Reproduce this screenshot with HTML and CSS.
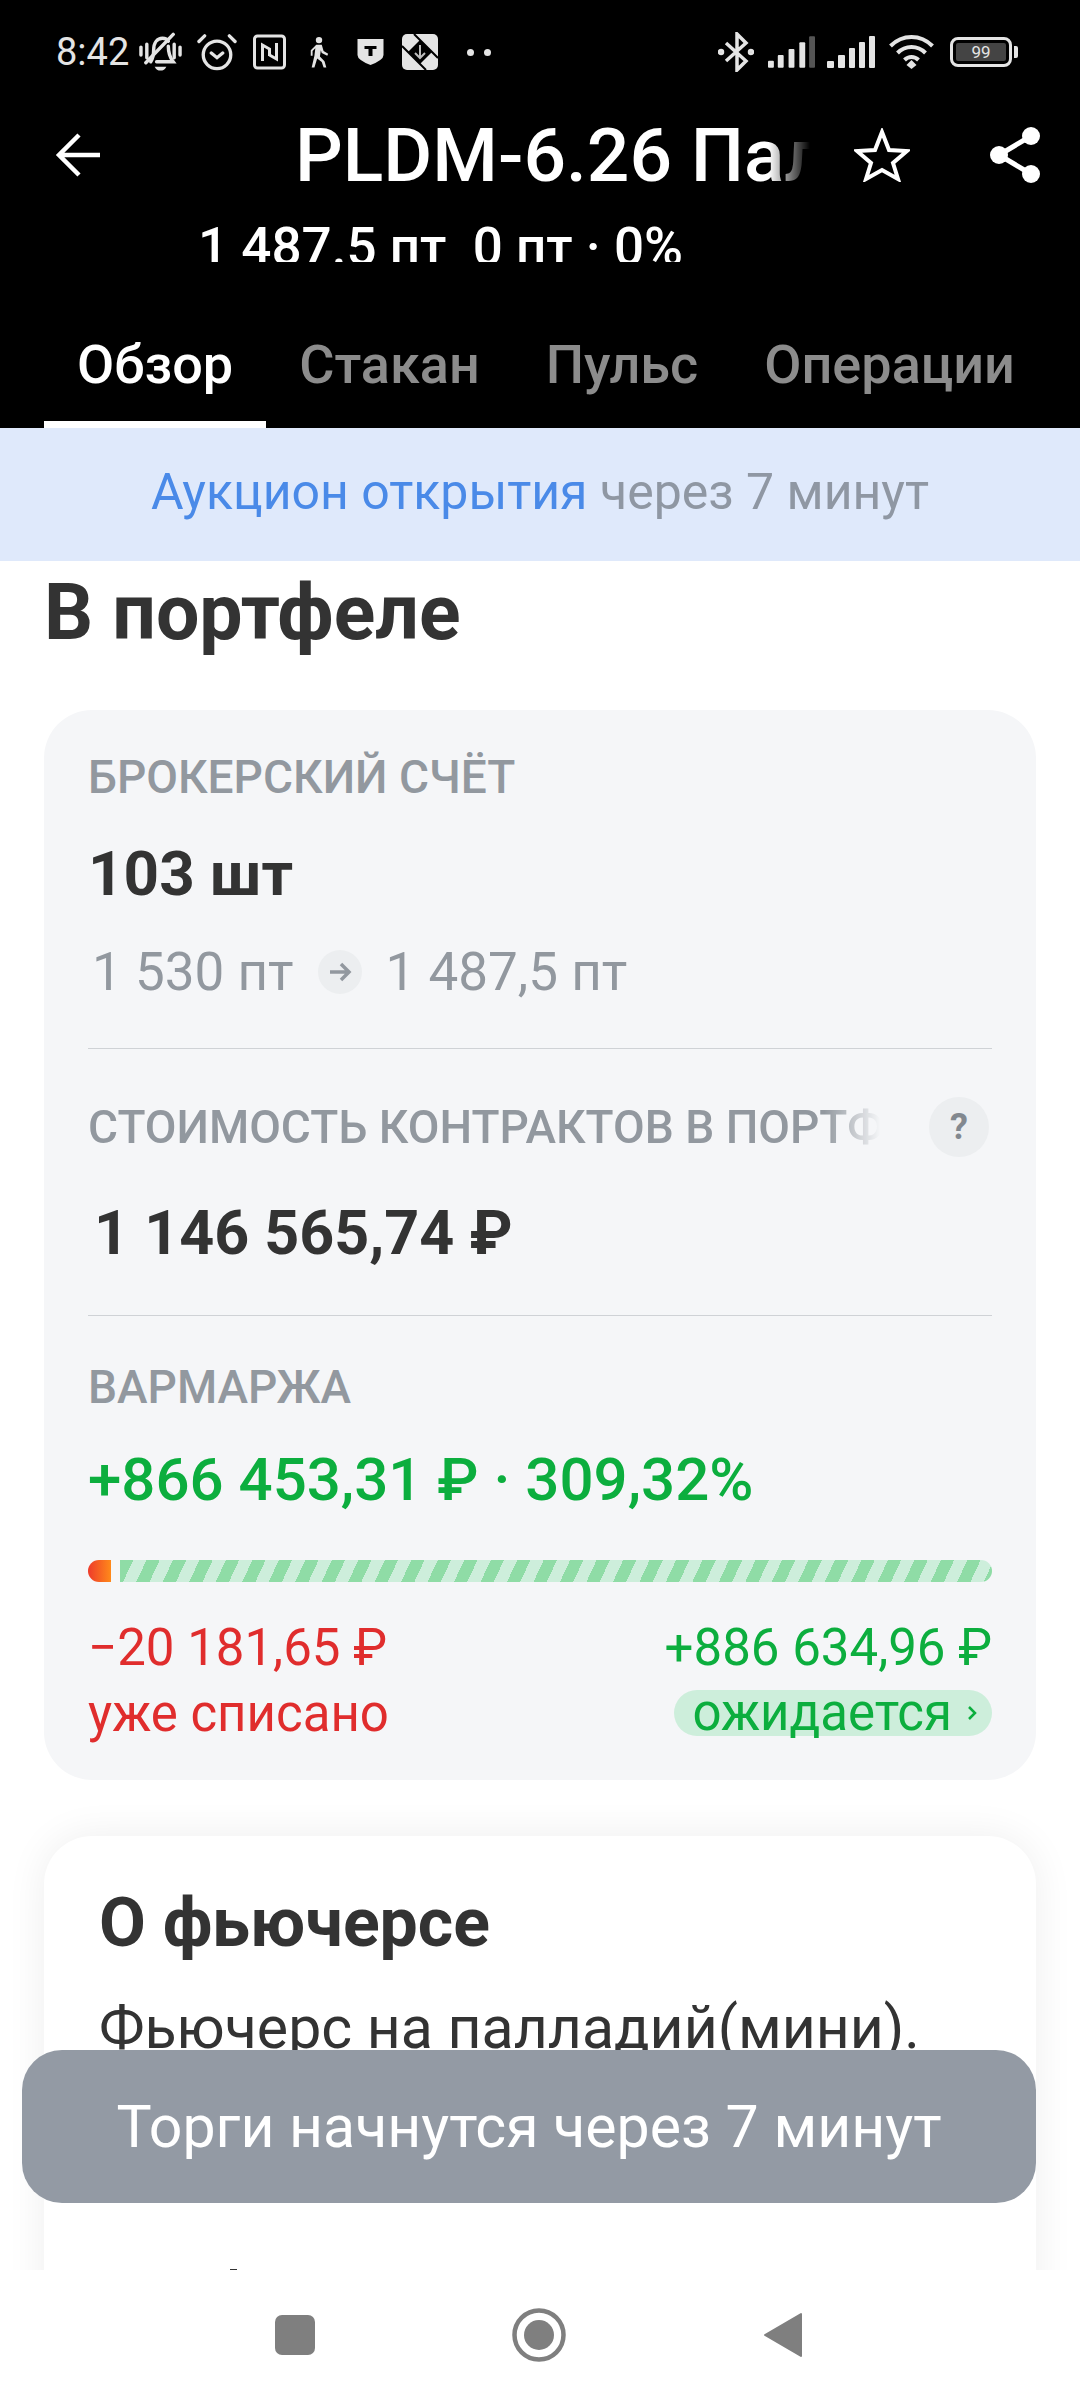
FILE: index.html
```html
<!DOCTYPE html>
<html lang="ru">
<head>
  <meta charset="UTF-8">
  <title>PLDM-6.26</title>
  <link rel="stylesheet" href="styles.css">
</head>
<body>
<div class="phone">
  <div class="top">
    <div class="status">
      <div class="status-left">
        <span class="time">8:42</span>
        <svg class="st bell" width="43" height="40" viewBox="0 0 44 40" fill="none" stroke="#e4e4e4" stroke-width="3.500" stroke-linecap="round"><path d="M2 15v8M8 12v14M36 12v14M42 15v8"/><path d="M12 30c2-3 3-6 3-12 0-8 4-12 9-12 3 0 5 1 6 3M30 14c0 8 2 12 5 16H18"/><path d="M7 31L35 2"/><path d="M16 35h12q-2 4-6 4t-6-4z" fill="#e4e4e4" stroke="none"/></svg>
        <svg class="st alarm" width="40" height="38" viewBox="0 0 42 40" fill="none" stroke="#e4e4e4" stroke-width="3.500" stroke-linecap="round"><circle cx="21" cy="23" r="14.500"/><path d="M15 21l6 5 6-5M2 9l6-6M40 9l-6-6"/></svg>
        <svg class="st nfc" width="35" height="36" viewBox="0 0 34 36" fill="none" stroke="#e4e4e4" stroke-width="3"><rect x="2" y="2" width="30" height="32" rx="3"/><path d="M10 27V11l7 4v7M24 9v16l-7-4"/></svg>
        <svg class="st walk" width="22" height="32" viewBox="0 0 24 34" fill="#e4e4e4"><circle cx="12" cy="4" r="3.500"/><path d="M9 9h6l2 7 5 3-1 2-6-3-1-3-1 7 5 5 2 7h-3l-2-6-5-4-3 10H4l3-13 1-8-3 3v5H3v-6z"/></svg>
        <svg class="st shield" width="29" height="28" viewBox="0 0 28 28"><path d="M1 1h26v16q0 5-13 10Q1 22 1 17z" fill="#e4e4e4"/><path d="M8 8h12v3h-4v7h-4v-7H8z" fill="#000"/></svg>
        <svg class="st box" width="36" height="36" viewBox="0 0 36 36"><rect width="36" height="36" rx="5" fill="#e4e4e4"/><path d="M12 0l24 24M0 12l24 24" fill="none" stroke="#000" stroke-width="2"/><path d="M18 6l12 12-12 12L6 18z" fill="#000"/><path d="M18 11v13M13 19l5 5 5-5" fill="none" stroke="#bbb" stroke-width="2"/></svg>
        <span class="dots"><i></i><i></i></span>
      </div>
      <div class="status-right">
        <svg width="36" height="40" viewBox="0 0 36 40" fill="none" stroke="#e4e4e4" stroke-width="3.500"><path d="M8 11l20 18-9 9V2l9 9L8 29"/><circle cx="3" cy="20" r="1.500"/><circle cx="33" cy="20" r="1.500"/></svg>
        <svg class="sig" width="47" height="32" viewBox="0 0 48 32"><g fill="#e4e4e4"><rect y="25" width="6" height="7" rx="1"/><rect x="10" y="19" width="6" height="13" rx="1"/><rect x="21" y="13" width="6" height="19" rx="1"/><rect x="32" y="6" width="6" height="26" rx="1"/></g><rect x="42" width="6" height="32" rx="1" fill="#555"/></svg>
        <svg class="sig2" width="48" height="32" viewBox="0 0 48 32" fill="#e4e4e4"><rect y="25" width="7" height="7" rx="1"/><rect x="11" y="19" width="7" height="13" rx="1"/><rect x="22" y="12" width="6" height="20" rx="1"/><rect x="32" y="6" width="6" height="26" rx="1"/><rect x="42" width="6" height="32" rx="1"/></svg>
        <svg class="wifi" width="47" height="36" viewBox="0 0 46 36" fill="none" stroke="#e4e4e4" stroke-width="4"><path d="M2 12c12-12 30-12 42 0M9 19c8-8 20-8 28 0M16 26c4-4 10-4 14 0"/><path d="M18 31l5-5 5 5-5 4z" fill="#e4e4e4" stroke="none"/></svg>
        <div class="battery"><div class="battery-body"><span>99</span></div><div class="battery-tip"></div></div>
      </div>
    </div>
    <div class="title-row">
      <svg class="back" width="46" height="46" viewBox="0 0 46 46" fill="none" stroke="#fff" stroke-width="4.500"><path d="M45 23H4M24 3L4 23l20 20"/></svg>
      <div class="title"><span>PLDM-6.26 Па</span><span>лладий</span></div>
      <svg class="star" width="56" height="54" viewBox="0 0 56 54" fill="none" stroke="#fff" stroke-width="4"><path d="M28 4l7 18 18 1-14 12 5 16-16-9-16 9 5-16L3 23l18-1z"/></svg>
      <svg class="share" width="52" height="58" viewBox="0 0 52 58" fill="#fff"><circle cx="41" cy="10" r="9"/><circle cx="9" cy="29" r="9"/><circle cx="41" cy="48" r="9"/><path d="M41 10L9 29l32 19" fill="none" stroke="#fff" stroke-width="5"/></svg>
    </div>
    <div class="price-row"><span>1 487.5 пт&nbsp; 0 пт · 0%</span></div>
    <div class="tabs">
      <div class="tab active">Обзор</div>
      <div class="tab">Стакан</div>
      <div class="tab">Пульс</div>
      <div class="tab">Операции</div>
    </div>
  </div>

  <div class="banner"><b>Аукцион открытия</b> через 7 минут</div>

  <div class="content">
    <h1 class="heading">В портфеле</h1>

    <div class="card">
      <div class="label">БРОКЕРСКИЙ СЧЁТ</div>
      <div class="amount">103 шт</div>
      <div class="change">
        <span>1 530 пт</span>
        <svg class="arrow" width="44" height="44" viewBox="0 0 44 44"><circle cx="22" cy="22" r="22" fill="#eceef0"/><path d="M12 22h19M23 14l8 8-8 8" fill="none" stroke="#92989f" stroke-width="3.500"/></svg>
        <span>1 487,5 пт</span>
      </div>
      <div class="line"></div>
      <div class="label-row">
        <div class="label fade">СТОИМОСТЬ КОНТРАКТОВ В ПОРТФЕЛЕ</div>
        <div class="hint">?</div>
      </div>
      <div class="amount sum">1 146 565,74 ₽</div>
      <div class="line second"></div>
      <div class="label">ВАРМАРЖА</div>
      <div class="margin">+866 453,31 ₽ · 309,32%</div>
      <div class="bar"><div class="bar-red"></div><div class="bar-green"></div></div>
      <div class="totals">
        <div class="red">
          <div class="num">−20 181,65 ₽</div>
          <div class="sub">уже списано</div>
        </div>
        <div class="green">
          <div class="num">+886 634,96 ₽</div>
          <div class="pill">ожидается <svg width="12" height="18" viewBox="0 0 12 18" fill="none" stroke="#0cae3e" stroke-width="2.500"><path d="M3 3l6 6-6 6"/></svg></div>
        </div>
      </div>
    </div>

    <div class="card white">
      <h2 class="about">О фьючерсе</h2>
      <p class="text">Фьючерс на палладий(мини).</p>
      <div class="tick"></div>
    </div>
  </div>

  <div class="toast">Торги начнутся через 7 минут</div>

  <div class="nav">
    <svg width="40" height="40" viewBox="0 0 40 40"><rect width="40" height="40" rx="7" fill="#7f7f7f"/></svg>
    <svg width="54" height="54" viewBox="0 0 54 54"><circle cx="27" cy="27" r="24.500" fill="none" stroke="#7f7f7f" stroke-width="4.500"/><circle cx="27" cy="27" r="15" fill="#7f7f7f"/></svg>
    <svg width="40" height="46" viewBox="0 0 40 46"><path d="M38 2v42L2 23z" fill="#7f7f7f" stroke="#7f7f7f" stroke-width="2" stroke-linejoin="round"/></svg>
  </div>
</div>
</body>
</html>
```

FILE: styles.css
```css
* {
  padding: 0;
  margin: 0;
  box-sizing: border-box;
}

body {
  font-family: Roboto, "Noto Sans", sans-serif;
  background: #fff;
}

.phone {
  width: 1080px;
  height: 2400px;
  position: relative;
  overflow: hidden;
  display: flex;
  flex-direction: column;
}

.top {
  background: #000;
  color: #fff;
  height: 428px;
  flex: none;
}

.status {
  height: 104px;
  padding: 0 62px 0 56px;
  display: flex;
  justify-content: space-between;
  align-items: center;
}

.status-left,
.status-right {
  display: flex;
  align-items: center;
}

.time {
  font-size: 38px;
  color: #e4e4e4;
  margin-right: 10px;
}

.alarm,
.nfc {
  margin-left: 15px;
}

.walk {
  margin-left: 21px;
}

.shield {
  margin-left: 26px;
}

.box {
  margin-left: 17px;
}

.dots {
  display: flex;
  gap: 10px;
  margin-left: 29px;
}

.dots i {
  width: 7px;
  height: 7px;
  border-radius: 50%;
  background: #e4e4e4;
}

.sig {
  margin-left: 14px;
}

.sig2 {
  margin-left: 12px;
}

.wifi {
  margin-left: 13px;
}

.battery {
  display: flex;
  align-items: center;
  gap: 2px;
  margin-left: 15px;
}

.battery-body {
  width: 62px;
  height: 30px;
  border: 3px solid #e4e4e4;
  border-radius: 8px;
  padding: 3px;
  display: flex;
}

.battery-body span {
  flex: 1;
  background: #444;
  border-radius: 2px;
  color: #e4e4e4;
  font-size: 17px;
  line-height: 18px;
  text-align: center;
}

.battery-tip {
  width: 4px;
  height: 12px;
  background: #e4e4e4;
  border-radius: 0 2px 2px 0;
}

.title-row {
  height: 102px;
  display: flex;
  align-items: center;
  padding-left: 55px;
}

.back {
  flex: none;
  margin-right: 194px;
}

.title {
  width: 515px;
  flex: none;
  overflow: hidden;
  white-space: nowrap;
  font-size: 75px;
  font-weight: 500;
  -webkit-mask-image: linear-gradient(to right, #000 92%, transparent 100%);
  mask-image: linear-gradient(to right, #000 92%, transparent 100%);
}

.star {
  flex: none;
  margin-left: 44px;
}

.share {
  flex: none;
  margin-left: 80px;
}

.price-row {
  height: 56px;
  overflow: hidden;
  padding-left: 198px;
  font-size: 53px;
  font-weight: 500;
  line-height: 82px;
  white-space: nowrap;
}

.tabs {
  margin-top: 40px;
  height: 126px;
  display: flex;
  padding-left: 44px;
}

.tab {
  font-size: 54px;
  font-weight: 500;
  color: #8c8c8c;
  padding: 0 33px;
  line-height: 126px;
  white-space: nowrap;
}

.tab.active {
  color: #fff;
  border-bottom: 7px solid #fff;
  height: 126px;
}

.banner {
  height: 133px;
  flex: none;
  background: #dfe9fb;
  display: flex;
  align-items: center;
  justify-content: center;
  padding-bottom: 6px;
  font-size: 50px;
  color: #8f97a3;
  white-space: pre;
}

.banner b {
  font-weight: 400;
  color: #4a8ae8;
}

.content {
  flex: 1;
  overflow: hidden;
}

.heading {
  font-size: 77px;
  font-weight: 700;
  color: #333;
  padding-left: 44px;
  line-height: 104px;
}

.card {
  width: 992px;
  margin: 45px 0 0 44px;
  background: #f5f6f8;
  border-radius: 48px;
  padding: 41px 44px;
  height: 1070px;
}

.label {
  font-size: 46px;
  font-weight: 500;
  color: #92989f;
  line-height: 52px;
  white-space: nowrap;
}

.amount {
  font-size: 62px;
  font-weight: 700;
  color: #333;
  line-height: 70px;
  margin-top: 36px;
}

.change {
  display: flex;
  align-items: center;
  gap: 24px;
  font-size: 53px;
  color: #92989f;
  margin: 33px 0 0 4px;
  height: 60px;
}

.line {
  height: 1px;
  background: #cfd2d6;
  margin: 46px 0 48px;
}

.line.second {
  margin: 47px 0 45px;
}

.label-row {
  display: flex;
  align-items: center;
  justify-content: space-between;
  height: 60px;
}

.fade {
  width: 792px;
  overflow: hidden;
  -webkit-mask-image: linear-gradient(to right, #000 93%, transparent 100%);
  mask-image: linear-gradient(to right, #000 93%, transparent 100%);
}

.hint {
  width: 60px;
  height: 60px;
  margin-right: 3px;
  border-radius: 50%;
  background: #eceef0;
  color: #82888f;
  font-size: 36px;
  font-weight: 700;
  text-align: center;
  line-height: 60px;
}

.sum {
  margin: 41px 0 0 6px;
  font-size: 61px;
}

.margin {
  font-size: 60px;
  font-weight: 500;
  color: #0cae3e;
  line-height: 66px;
  margin-top: 34px;
}

.bar {
  display: flex;
  gap: 9px;
  height: 22px;
  margin-top: 47px;
}

.bar-red {
  width: 23px;
  border-radius: 11px 0 0 11px;
  background: linear-gradient(to right, #ee3b2b, #ff8a1a);
}

.bar-green {
  flex: 1;
  border-radius: 0 11px 11px 0;
  background: repeating-linear-gradient(115deg, #8fdca6 0 12px, #cdeedb 12px 24px);
}

.totals {
  display: flex;
  justify-content: space-between;
  margin-top: 39px;
  font-size: 51px;
  line-height: 54px;
}

.red {
  color: #e02d2d;
}

.green {
  color: #0cae3e;
  text-align: right;
}

.sub {
  margin-top: 12px;
}

.pill {
  display: inline-flex;
  align-items: center;
  gap: 14px;
  height: 46px;
  margin-top: 15px;
  padding: 0 14px 0 18px;
  border-radius: 23px;
  background: #cdeedb;
}

.card.white {
  background: #fff;
  box-shadow: 0 0 40px rgba(0, 0, 0, .07);
  padding: 52px 55px;
  margin-top: 56px;
}

.about {
  font-size: 68px;
  font-weight: 700;
  color: #333;
  line-height: 70px;
}

.text {
  font-size: 59px;
  color: #333;
  line-height: 60px;
  margin-top: 40px;
}

.tick {
  width: 7px;
  height: 3px;
  background: #333;
  margin: 211px 0 0 131px;
}

/* toast lies over the card */
.toast {
  position: absolute;
  left: 22px;
  top: 2050px;
  width: 1014px;
  height: 153px;
  border-radius: 40px;
  background: #939aa4;
  color: #fff;
  font-size: 59px;
  display: flex;
  align-items: center;
  justify-content: center;
}

.nav {
  height: 130px;
  flex: none;
  background: #fff;
  display: flex;
  align-items: center;
  padding: 0 277px 0 275px;
  justify-content: space-between;
}
```
